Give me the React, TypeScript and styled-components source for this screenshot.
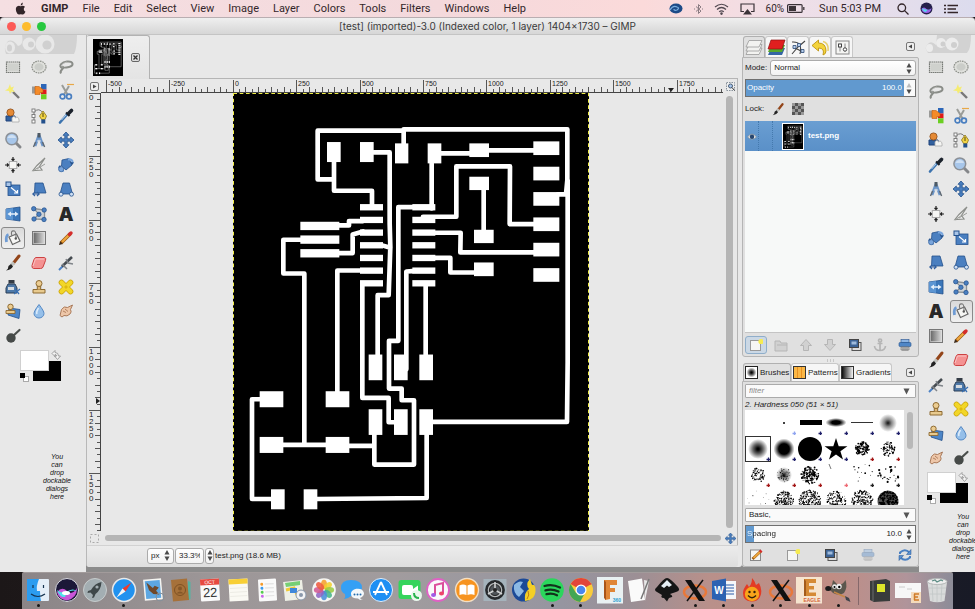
import React, { useState } from "react";
import styled, { createGlobalStyle, css } from "styled-components";

const GlobalStyle = createGlobalStyle`
  * { box-sizing: border-box; }
  body { margin: 0; background: #17161a; }
  button, input, select { font: inherit; color: inherit; margin: 0; padding: 0; border: 0; background: none; appearance: none; outline: none; min-width: 0; border-radius: 0; }
  button { display: flex; align-items: center; justify-content: center; }
  svg { display: block; flex: none; }
`;

const Screen = styled.div`
  display: flex;
  flex-direction: column;
  height: 100vh;
  overflow: hidden;
  font-family: "Liberation Sans", Arial, sans-serif;
  font-size: 8px;
  line-height: 10px;
  color: #1c1c1c;
`;

/* ---------- system menu bar ---------- */

const MenuBar = styled.header`
  display: flex;
  align-items: center;
  justify-content: space-between;
  height: 17px;
  flex: none;
  padding: 0 17px 0 14px;
  background: linear-gradient(90deg, #f5dfe2, #f4d9dc 45%, #fbdada 66%, #efdfe8 82%, #dcdcee);
  font-family: Roboto, sans-serif;
  font-size: 11px;
  line-height: 16px;
  color: #33262a;
`;
const MenuGroup = styled.nav`
  display: flex;
  align-items: center;
  gap: 14px;
`;
const MenuItem = styled.button<{ $strong?: boolean }>`
  font-weight: ${(p) => (p.$strong ? 700 : 400)};
`;
const Status = styled.div`
  display: flex;
  align-items: center;
  gap: 11px;
`;
const Battery = styled.span`
  display: flex;
  align-items: center;
  gap: 3px;
  font-size: 10px;
`;
const Clock = styled.span`
  margin: 0 5px 0 3px;
`;

/* ---------- window ---------- */

const TitleBar = styled.div`
  display: grid;
  grid-template-columns: 1fr auto 1fr;
  align-items: center;
  height: 18px;
  flex: none;
  padding: 0 7px;
  border-top: 1px solid #b9aeb1;
  border-bottom: 1px solid #c4c4c4;
  border-radius: 4px 4px 0 0;
  background: linear-gradient(#efefef, #d6d6d6);
  font-family: Inter, sans-serif;
  font-size: 10px;
  line-height: 14px;
  color: #3b3b3b;
`;
const Lights = styled.div`
  display: flex;
  gap: 6px;
`;
const Light = styled.button<{ $color: string }>`
  width: 9px;
  height: 9px;
  border-radius: 50%;
  background: ${(p) => p.$color};
`;
const Body = styled.main`
  display: grid;
  grid-template-columns: 86px minmax(0, 1fr) 177px 56px;
  grid-template-rows: minmax(0, 1fr);
  flex: 1;
  min-height: 0;
  background: #8b8b8b;
`;

/* ---------- toolbox ---------- */

const Toolbox = styled.aside<{ $narrow?: boolean }>`
  display: flex;
  flex-direction: column;
  padding: 0 ${(p) => (p.$narrow ? 1 : 7)}px 0 ${(p) => (p.$narrow ? 4 : 0)}px;
  background: #e8e8e8;
  overflow: hidden;
`;
const Eyes = styled.div<{ $narrow?: boolean }>`
  display: flex;
  padding-left: ${(p) => (p.$narrow ? 2 : 4)}px;
  height: 20px;
  flex: none;
`;
const ToolGrid = styled.div<{ $cols: number }>`
  display: grid;
  grid-template-columns: repeat(${(p) => p.$cols}, 1fr);
  grid-auto-rows: 1fr;
  height: ${(p) => (p.$cols === 3 ? 293 : 415)}px;
  flex: none;
`;
const ToolButton = styled.button<{ $active: boolean }>`
  border: 1px solid ${(p) => (p.$active ? "#8a8a8a" : "transparent")};
  border-radius: 3px;
  margin: 1px;
  svg {
    overflow: visible;
  }
  ${(p) =>
    p.$active &&
    css`
      background: linear-gradient(#dadada, #f0f0f0);
    `}
`;
const Swatches = styled.div<{ $narrow?: boolean }>`
  padding: 2px 0 0 ${(p) => (p.$narrow ? 4 : 20)}px;
`;
const DropHint = styled.p<{ $narrow?: boolean }>`
  width: 32px;
  margin: ${(p) => (p.$narrow ? "9px 0 0 24px" : "71px 0 0 41px")};
  flex: none;
  text-align: center;
  font-size: 7px;
  font-style: italic;
  line-height: 8px;
  color: #111;
`;

/* ---------- image area ---------- */

const ImagePane = styled.section`
  display: flex;
  flex-direction: column;
  margin-bottom: 5px;
  background: #e8e8e8;
  border-left: 1px solid #b8b8b8;
  border-radius: 0 0 3px 3px;
  min-width: 0;
  padding-right: 4px;
`;
const TabStrip = styled.div`
  display: flex;
  height: 44px;
  flex: none;
`;
const ImageTab = styled.div`
  display: flex;
  align-items: center;
  gap: 8px;
  width: 63px;
  padding-left: 6px;
  border: 1px solid #b2b2b2;
  border-width: 1px 1px 0 0;
  border-radius: 2px 3px 0 0;
  background: linear-gradient(#eee, #e4e4e4);
`;
const TabRule = styled.div`
  flex: 1;
  border-bottom: 1px solid #b5b5b5;
`;
const Workspace = styled.div`
  display: grid;
  grid-template-columns: 14px minmax(0, 1fr) 14px;
  grid-template-rows: 14px minmax(0, 1fr) 14px;
  flex: 1;
  min-height: 0;
  border-right: 1px solid #b5b5b5;
`;
const Corner = styled.button`
  width: 100%;
  height: 100%;
`;
const RulerTop = styled.div`
  overflow: hidden;
  border-bottom: 1px solid #444;
`;
const RulerLeft = styled.div`
  overflow: hidden;
  border-right: 1px solid #444;
`;
const CanvasView = styled.div`
  overflow: hidden;
  padding-left: 132px;
`;
const Scroll = styled.div<{ $vertical?: boolean }>`
  padding: ${(p) => (p.$vertical ? "3px 4px 3px 3px" : "4px 2px 4px 4px")};
`;
const ScrollThumb = styled.div`
  height: 100%;
  border-radius: 4px;
  background: #b5b5b5;
`;
const StatusBar = styled.footer`
  display: flex;
  align-items: center;
  gap: 1px;
  height: 22px;
  flex: none;
  padding: 0 0 2px 60px;
  border-top: 1px solid #d2d2d2;
  background: linear-gradient(#ececec, #dedede);
  border-radius: 0 0 3px 3px;
`;
const FieldBox = styled.div<{ $w?: number }>`
  display: flex;
  align-items: center;
  width: ${(p) => (p.$w ? p.$w + "px" : "auto")};
  flex: ${(p) => (p.$w ? "none" : "1")};
  height: 16px;
  padding: 0 ${(p) => (p.$w && p.$w < 10 ? 0 : 3)}px;
  border: 1px solid #ababab;
  border-radius: 3px;
  background: linear-gradient(#fff, #f3f3f3);
  min-width: 0;
`;
const Select = styled.select`
  flex: 1;
  width: 100%;
`;
const TextInput = styled.input<{ $right?: boolean }>`
  flex: 1;
  width: 100%;
  text-align: ${(p) => (p.$right ? "right" : "left")};
  &::placeholder {
    font-style: italic;
    color: #8c8c8c;
  }
`;

/* ---------- docks ---------- */

const Docks = styled.aside`
  display: flex;
  flex-direction: column;
  margin-bottom: 5px;
  padding-top: 1px;
  background: #e8e8e8;
  border-radius: 0 0 3px 3px;
  min-width: 0;
`;
const DockTabs = styled.div<{ $tall?: boolean }>`
  display: flex;
  height: ${(p) => (p.$tall ? 21 : 18)}px;
  flex: none;
  padding: 0 4px 0 1px;
`;
const DockTab = styled.button<{ $active?: boolean; $wide?: number }>`
  gap: 2px;
  width: ${(p) => p.$wide || 22}px;
  flex: none;
  justify-content: ${(p) => (p.$wide ? "flex-start" : "center")};
  padding-left: ${(p) => (p.$wide ? 1 : 0)}px;
  border: 1px solid ${(p) => (p.$active ? "#b0b0b0" : "#c8c8c8")};
  border-bottom: 0;
  border-radius: 3px 3px 0 0;
  background: ${(p) => (p.$active ? "#e0e0e0" : "#f6f6f6")};
  white-space: nowrap;
`;
const DockMenu = styled.button`
  margin: auto 0 auto auto;
`;
const Panel = styled.section<{ $grow?: boolean }>`
  display: flex;
  flex-direction: column;
  gap: 3px;
  flex: ${(p) => (p.$grow ? "1 1 0" : "none")};
  min-height: 0;
  padding: 2px 2px 0;
  border: 1px solid #b5b5b5;
  border-radius: 0 2px 3px 3px;
  background: #e0e0e0;
`;
const Row = styled.div`
  display: flex;
  align-items: center;
  gap: 3px;
  flex: none;
`;
const LockRow = styled(Row)`
  height: 18px;
  gap: 8px;
`;
const ScaleBox = styled.div<{ $fill: string; $ink: string }>`
  display: flex;
  align-items: center;
  height: 18px;
  flex: none;
  padding: 0 3px 0 1px;
  border: 1px solid #6f6f6f;
  background: linear-gradient(90deg, #6199cf ${(p) => p.$fill}, #fafafa ${(p) => p.$fill});
  color: ${(p) => p.$ink};
`;
const ScaleLabel = styled.label<{ $split?: boolean }>`
  ${(p) =>
    p.$split &&
    css`
      background: linear-gradient(90deg, #fff 6px, #1c1c1c 6px);
      background-clip: text;
      color: transparent;
    `}
`;
const ScaleInput = styled(TextInput)`
  margin-right: 4px;
`;
const LayerList = styled.div`
  flex: 1;
  min-height: 0;
  background: #f7f9f8;
  border-bottom: 1px solid #c4c4c4;
`;
const LayerRow = styled.div`
  display: flex;
  align-items: center;
  height: 30px;
  padding-left: 2px;
  background: linear-gradient(#6a9ed2, #5a90c8);
  color: #fff;
  font-weight: 700;
`;
const LayerCell = styled.span<{ $w: number }>`
  display: flex;
  align-items: center;
  width: ${(p) => p.$w}px;
  height: 100%;
  border-right: 1px dotted #4479ad;
`;
const LayerThumb = styled.span`
  margin: 0 4px 0 9px;
  border: 1px solid #fff;
`;
const Actions = styled.div`
  display: flex;
  align-items: center;
  justify-content: space-between;
  height: 20px;
  padding-bottom: 2px;
  flex: none;
`;
const ActionButton = styled.button<{ $focus?: boolean; $dim?: boolean }>`
  width: 22px;
  height: 18px;
  border-radius: 3px;
  opacity: ${(p) => (p.$dim ? 0.4 : 1)};
  ${(p) =>
    p.$focus &&
    css`
      border: 1px solid #8faeca;
      background: #cbd8e5;
    `}
`;
const Grip = styled.div`
  height: 6px;
  flex: none;
  display: flex;
  align-items: center;
  justify-content: center;
`;
const BrushTitle = styled.div`
  font-style: italic;
  line-height: 8px;
  flex: none;
`;
const BrushArea = styled.div`
  display: flex;
  flex: 1;
  min-height: 0;
  margin-top: -2px;
`;
const BrushGrid = styled.div`
  display: grid;
  grid-template-columns: repeat(6, 26px);
  grid-auto-rows: 26px;
  flex: 1;
  background: #fff;
  overflow: hidden;
`;
const BrushCell = styled.button<{ $active: boolean }>`
  border: 1px solid ${(p) => (p.$active ? "#333" : "transparent")};
  overflow: hidden;
`;
const BrushScroll = styled.div`
  width: 12px;
  padding: 2px 3px;
`;
const BrushThumb = styled.div`
  height: 37px;
  border-radius: 3px;
  background: #b8b8b8;
`;
const BrushPanelBox = styled(Panel)`
  height: 186px;
`;
const FlatField = styled.div`
  display: flex;
  align-items: center;
  height: 14px;
  flex: none;
  padding: 0 5px 0 3px;
  border: 1px solid #aaa;
  border-radius: 1px;
  background: #fafafa;
`;

/* ---------- system dock ---------- */

const Desktop = styled.div`
  display: flex;
  height: 37px;
  flex: none;
  padding: 0 22px;
  background: linear-gradient(90deg, #1c1718, #2a2426 50%, #181a26);
`;
const Shelf = styled.div`
  display: flex;
  align-items: stretch;
  flex: 1;
  padding: 0 2px;
  border-top: 1px solid #a29b9b;
  border-radius: 2px 2px 0 0;
  background: linear-gradient(90deg, #8b8587, #9c9697 20%, #a19c9e 40%, #9695a0 58%, #9c8f95 66%, #b9908a 74%, #c08d84 87%, #b0949a 95%, #8c8c98);
`;
const ShelfGroup = styled.div<{ $n: number }>`
  display: flex;
  flex: ${(p) => p.$n};
`;
const ShelfItem = styled.button`
  flex: 1;
  flex-direction: column;
  justify-content: flex-start;
  padding-top: 4px;
`;
const Dot = styled.span<{ $on?: boolean }>`
  width: 3px;
  height: 3px;
  border-radius: 50%;
  background: ${(p) => (p.$on ? "#161616" : "transparent")};
`;
const ShelfRule = styled.div`
  width: 1px;
  margin: 4px 6px;
  background: #85686a;
`;

/* ---------- drawings ---------- */

const chipRows = [342, 380, 418, 456, 494, 532, 570];
const pads: number[][] = [
  [292, 156, 41, 60], [391, 156, 41, 60], [496, 160, 40, 60], [594, 160, 41, 60], [719, 160, 59, 41],
  ...[154, 230, 306, 382, 458, 534].map((y) => [911, y, 78, 41]),
  [719, 260, 59, 40], [733, 419, 59, 40], [733, 517, 59, 41],
  ...chipRows.map((y) => [391, y, 69, 19]),
  ...chipRows.map((y) => [548, y, 69, 19]),
  ...[395, 436, 477].map((y) => [212, y, 117, 25]),
  ...[417, 493, 569].map((x) => [x, 793, 41, 77]),
  ...[417, 493, 569].map((x) => [x, 957, 41, 77]),
  [90, 903, 71, 48], [288, 903, 71, 48], [90, 1040, 71, 48], [288, 1040, 71, 48],
  [124, 1197, 41, 60], [222, 1197, 41, 60],
];
const traces =
  "M313 215V302H427V345 M313 268H264V122H522 M522 165V118H1013V270L1009 313H985 M1014 270V816L1012 995H610 " +
  "M432 187H480V400L482 470L477 615H444V795 M455 465L482 473 M606 220V355 M634 190H720 M778 181H912 " +
  "M580 380H680V229H841L840 402H912 M762 300V420 M615 428H693L692 487H912 M615 503H662V547H735 " +
  "M548 351H506V752H478V895H516V930H553V1123H434V1030 M548 543L530 544V837 M588 585V795 " +
  "M328 406H358V393H400 M328 489H369V433L400 424 M213 449H161V550H224V1064 M391 541H323V905 " +
  "M398 580V923H477V996H495 M358 1067H434 M160 1064H290 M90 927H67V1226H124 M262 1226L591 1223V1030";

const Board = ({ w, h, frame }: { w: number; h: number; frame?: boolean }) => (
  <svg width={w} height={h} viewBox="10 9 1068 1316" preserveAspectRatio="none" role="img" aria-label="test.png">
    <rect x="10" y="9" width="1068" height="1316" fill="#000" />
    <path d={traces} fill="none" stroke="#fff" strokeWidth={frame ? 14 : 18} strokeLinejoin="round" strokeLinecap="round" opacity={frame ? 1 : 0.65} />
    {pads.map(([x, y, pw, ph], i) => (
      <rect key={i} x={x} y={y} width={pw} height={ph} fill="#fff" />
    ))}
    {frame && <rect x="11" y="10" width="1066" height="1313" fill="none" stroke="#f0ee48" strokeWidth="4" strokeDasharray="11 8" />}
  </svg>
);

const tickIdx = Array.from({ length: 110 }, (_, i) => i);
const HRuler = () => (
  <svg width="100%" height="13" fontSize="7" fill="#222">
    {tickIdx.map((i) => {
      const x = Math.round(5 + (i * 63.4) / 10) + 0.5;
      const top = i % 10 === 0 ? 1 : i % 2 === 0 ? 8 : 10;
      return <path key={i} d={`M${x} ${top}V13`} stroke="#555" />;
    })}
    {[-500, -250, 0, 250, 500, 750, 1000, 1250, 1500, 1750].map((n, i) => (
      <text key={n} x={Math.round(7 + i * 63.4)} y="7">{n}</text>
    ))}
    <path d="M567 9h6l-3 4z" />
  </svg>
);
const VRuler = () => (
  <svg width="13" height="100%" fontSize="8" fill="#222">
    {tickIdx.slice(0, 70).map((i) => {
      const y = Math.round((i * 63.4) / 10) + 0.5;
      const left = i % 10 === 0 ? 2 : i % 2 === 0 ? 8 : 10;
      return <path key={i} d={`M${left} ${y}H13`} stroke="#555" />;
    })}
    {["0", "250", "500", "750", "1000", "1250", "1500"].map((s, i) =>
      s.split("").map((c, k) => (
        <text key={s + k} x="2" y={Math.round(7 + i * 63.4 + k * 7)}>{c}</text>
      ))
    )}
    <path d="M9 305v6l4-3z" />
  </svg>
);

const B = "#4a7fc0";
const D = "#23508c";
const tools: [string, React.ReactNode][] = [
  ["Rectangle Select", <><rect x="1.5" y="3" width="13" height="10.5" fill="#dcddda" stroke="#777a76" strokeWidth="1.2" strokeDasharray="1.6 .5" /><rect x="3" y="4.6" width="10" height="7.3" fill="#cfd1cd" /></>],
  ["Ellipse Select", <><ellipse cx="8" cy="8" rx="7" ry="6" fill="#dfe0dc" stroke="#8b8e88" strokeWidth="1.2" strokeDasharray="1.6 .8" /><ellipse cx="8" cy="8" rx="4.6" ry="3.7" fill="#cbcdc9" /></>],
  ["Free Select", <><path d="M4 9C0 7 4 3 9 2.500C16 2 16 7 11 8C8 8.600 5 9 4 8C5 7 6 9 4 10.500C3 11.500 2 13 3 14.500" fill="none" stroke="#8a8d88" strokeWidth="2" /><path d="M4.500 8C2 6.500 5 4 9 3" fill="none" stroke="#c8c9c6" strokeWidth=".7" /></>],
  ["Fuzzy Select", <><path d="M6.500 6.500L14 14" stroke="#777" strokeWidth="2.4" /><path d="M6 6L8 8" stroke="#f4f4ef" strokeWidth="2" /><path d="M5 0L6 3.500L9 2.500L7.500 5.500L10 8L6.500 7.500L5 10L4 7L0 6.500L3.200 4.500z" fill="#f5ec72" /></>],
  ["Select by Color", <><rect x="10" y="0" width="5.500" height="5.500" fill="#2c66b8" /><rect x="10" y="5.500" width="5.500" height="4.800" fill="#e01818" /><rect x="10" y="10.300" width="5.500" height="5" fill="#6bcf22" /><path d="M1 2.500h4.500v7H1z" fill="#9a9a98" /><path d="M4 2.500h4l4 3v3H9v2H4z" fill="#f58b28" stroke="#c05c0a" strokeWidth=".6" /></>],
  ["Scissors Select", <><path d="M9 .5H16" stroke="#e8a848" strokeWidth="1.200" /><path d="M4 1L9.500 10.500M11 2L6 10.500" stroke="#9a9c98" strokeWidth="2" /><circle cx="4.500" cy="12.500" r="2.400" fill="none" stroke={B} strokeWidth="1.700" /><circle cx="11" cy="12.500" r="2.400" fill="none" stroke={B} strokeWidth="1.700" /></>],
  ["Foreground Select", <><path d="M1 8h9v5H1z" fill="#32619f" stroke="#1f437a" /><circle cx="5.500" cy="4.500" r="3.600" fill="#e58a35" stroke="#8b4b16" strokeWidth=".8" /><path d="M7 14V10c1-2 3-2 3.500 0 2-2 4 0 3.500 4z" fill="#f5f5f3" stroke="#aaa" strokeWidth=".8" /></>],
  ["Paths", <><path d="M3 14V4Q8-1 12 5" fill="none" stroke="#777" /><g fill="#fff" stroke="#777" strokeWidth=".9"><rect x="1" y="1" width="3" height="3" /><rect x="1" y="6.500" width="3" height="3" /><rect x="1" y="12" width="3" height="3" /></g><path d="M12 3L15.500 8L14 11.500H10.500L8.500 8z" fill="#f1d445" stroke="#8b7418" strokeWidth=".8" /><rect x="10.300" y="11.500" width="4" height="4" fill={D} /><path d="M12 5v4" stroke="#564610" /></>],
  ["Color Picker", <><path d="M2 14.500L9 6.500" stroke="#3c73ae" strokeWidth="2.600" strokeLinecap="round" /><path d="M3.500 12L8 7" stroke="#b4d2ee" strokeWidth="1" /><path d="M8 4.500L11.500 8" stroke="#1b222c" strokeWidth="2" /><path d="M10.500 5.500L13.500 2.500" stroke="#1b222c" strokeWidth="3.600" strokeLinecap="round" /></>],
  ["Zoom", <><path d="M11 11L15 15" stroke="#85878a" strokeWidth="3" strokeLinecap="round" /><circle cx="6.800" cy="6.800" r="5.900" fill="#a7c6ea" stroke="#8b9097" strokeWidth="1.500" /><path d="M2.500 6a4.500 4.500 0 0 1 8.500 0z" fill="#cfe0f3" /></>],
  ["Measure", <><path d="M8 3L4 14M8 3L12 14" stroke="#6c95c8" strokeWidth="2.800" /><path d="M6 9h4" stroke="#dfe3e8" /><path d="M8 1v4.500" stroke="#4e5a64" strokeWidth="3" /><path d="M4.600 10L2.500 15M11.500 10L13.600 15" stroke="#5f6872" strokeWidth="1.400" /></>],
  ["Move", <path d="M8 0L11 3.300H9.200V6.800H12.700V5L16 8L12.700 11V9.200H9.200V12.700H11L8 16L5 12.700H6.800V9.200H3.300V11L0 8L3.300 5V6.800H6.800V3.300H5z" fill={B} stroke={D} strokeWidth=".8" />],
  ["Align", <><rect x="4.300" y="4.500" width="7.500" height="7" fill="#f5f5f3" stroke="#aaa" /><path d="M8 0v4M6.500 2L8 3.500L9.500 2M8 16v-4M6.500 14L8 12.500L9.500 14M0 8h4M2 6.500L3.500 8L2 9.500M16 8h-4M14 6.500L12.500 8L14 9.500" fill="none" stroke="#222" strokeWidth="1.200" /></>],
  ["Crop", <><path d="M14 1L6 8.500L2 13.500L11 13L8.500 9.500z" fill="#eee" stroke="#8c8e8a" strokeWidth="1.200" /><path d="M2 14L8.500 9.500M6 12L14 7" stroke="#9c9e9a" /></>],
  ["Rotate", <><path d="M4 3L11 1.500L14 8L8 13L3.500 9z" fill={B} stroke={D} strokeWidth=".8" /><path d="M10 2.500Q15 2 14.500 6M6 13.500Q1 14 1.500 10" fill="none" stroke="#7aa6dd" strokeWidth="2.200" /><path d="M12 5l4 .5-2 2.500zM4 11L0 10.500 2 8z" fill={D} /><circle cx="3.200" cy="12.200" r="2.600" fill="#79a5dc" stroke={D} strokeWidth=".6" /></>],
  ["Scale", <><rect x="3" y="4" width="12" height="10.500" fill={B} stroke={D} strokeWidth=".8" /><rect x="1" y="1" width="5" height="4.500" fill="#a9c5e8" stroke={D} /><path d="M6 6.500L12 11.500M12.500 9v3h-3.500" stroke="#fff" fill="none" strokeWidth="1.200" /></>],
  ["Shear", <><path d="M4 2H12L15 12H3.500z" fill={B} stroke={D} strokeWidth=".8" /><path d="M2 13h6M6 11l2.200 2L6 15M4 11l-2.200 2L4 15" stroke="#315f9e" fill="#d2e2f5" strokeWidth="1.100" /></>],
  ["Perspective", <><path d="M5 2h6.500L14.500 13H2z" fill={B} stroke={D} strokeWidth=".8" /><circle cx="3" cy="13.200" r="2" fill="#cfe0f5" stroke={D} strokeWidth=".8" /><circle cx="13.500" cy="13.200" r="2" fill="#cfe0f5" stroke={D} strokeWidth=".8" /></>],
  ["Flip", <><path d="M1 3L15 1V15L1 13z" fill="#3a76b9" stroke={D} strokeWidth=".8" /><path d="M8 2V14L1 13V3z" fill="#5c95d2" /><path d="M2.500 8L6 5.500V10.500zM13.500 8L10 5.500V10.500z" fill="#e5effa" /><path d="M5 8h6" stroke="#e5effa" strokeWidth="1.500" /></>],
  ["Cage Transform", <><path d="M2.500 2.500L13.500 4V13.500L3 13L8 8z" fill="#cfd4d8" stroke="#8d9296" strokeWidth="1.300" /><g fill={B} stroke={D} strokeWidth=".7"><circle cx="2.700" cy="2.700" r="2.200" /><circle cx="13.200" cy="4" r="2.200" /><circle cx="7.900" cy="8.300" r="2.200" /><circle cx="3" cy="13" r="2.200" /><circle cx="13" cy="13.500" r="2.200" /></g></>],
  ["Text", <text x="8" y="15" textAnchor="middle" fontFamily="Inter" fontSize="19" fontWeight="900" fill="#282828">A</text>],
  ["Bucket Fill", <><path d="M3.500 4.500Q.5 5.500 1.500 12" fill="none" stroke="#6e9bd4" strokeWidth="2.800" /><path d="M4 7L11.500 4L15 11L7.500 14.500z" fill="#f6f6f4" stroke="#666" strokeWidth="1.200" /><path d="M7 6Q5 0 9.500 1Q11 1.500 11 8" fill="none" stroke="#777" strokeWidth="1.100" /><circle cx="10.800" cy="8.500" r="1.200" fill="#555" /></>],
  ["Blend", <><rect x="1.500" y="1.500" width="13" height="13" fill="url(#blendGrad)" stroke="#777" /><rect x="2.500" y="2.500" width="11" height="11" fill="none" stroke="#e0e0e0" strokeWidth=".6" /></>],
  ["Pencil", <><path d="M3 13L12.500 3.500" stroke="#96540f" strokeWidth="3.600" /><path d="M4 12L11.500 4.500" stroke="#eda63c" strokeWidth="2.400" /><path d="M11.500 4.500L13 3" stroke="#d52c2c" strokeWidth="3.400" strokeLinecap="round" /><path d="M1 15L2 11.200L4.800 14z" fill="#3c2b1b" /></>],
  ["Paintbrush", <><path d="M8.500 8L14 1" stroke="#93451a" strokeWidth="3" strokeLinecap="round" /><path d="M6.500 10L9 7.500" stroke="#bfc1bd" strokeWidth="3.500" /><path d="M1 15.500Q3.500 14 3.500 11L6 9L8 11.500Q6 15 1 15.500z" fill="#222" /></>],
  ["Eraser", <><path d="M5 2.500H13.500Q15.500 3 14.500 5.500L12 12Q11.500 13.500 9.500 13.500H2.500Q.5 13 1 10.500L3 4.500Q3.500 3 5 2.500z" fill="#f49292" stroke="#cc4141" /><path d="M2 11L4.500 4H13" fill="none" stroke="#f9c3c3" /></>],
  ["Airbrush", <><path d="M1 15L5 11" stroke="#4d82c5" strokeWidth="2" /><path d="M4 11.500L14 2" stroke="#454b50" strokeWidth="2.600" /><path d="M8 4L10 8L15 9M4 9L9 14" fill="none" stroke="#80858a" strokeWidth="1.500" /></>],
  ["Ink", <><path d="M3.500 1h6v3.500h-6z" fill="#333b45" /><path d="M3 5h7l2 4v5H1V9z" fill="#4e79a8" stroke="#2b3f57" /><rect x="3" y="8" width="6" height="3" fill="#d6dce2" /><path d="M9 15l6-5M10 10l4 5" stroke="#386fb2" strokeWidth="1.300" /></>],
  ["Clone", <><path d="M2 10.500h12v3.500H2z" fill="#e8ca8e" stroke="#8d6a32" /><path d="M6.300 10.500V7h3.400v3.500" fill="#dcb675" stroke="#8d6a32" /><circle cx="8" cy="4.500" r="3" fill="#eccd92" stroke="#8d6a32" /></>],
  ["Heal", <><path d="M3.500 3.500L12.500 12.500M12.500 3.500L3.500 12.500" stroke="#c9a208" strokeWidth="5.600" strokeLinecap="round" /><path d="M3.500 3.500L12.500 12.500M12.500 3.500L3.500 12.500" stroke="#f2d628" strokeWidth="4.300" strokeLinecap="round" /><path d="M6 8l2-2 2 2-2 2z" fill="#ddb812" /></>],
  ["Perspective Clone", <><path d="M4 5L15 6.500L14 15.500L3 12z" fill="#4d86c7" stroke={D} strokeWidth=".8" /><path d="M1 7.500h9v3H1z" fill="#e8ca8e" stroke="#8d6a32" strokeWidth=".9" /><circle cx="5.500" cy="3.800" r="2.700" fill="#eccd92" stroke="#8d6a32" /><path d="M5.500 6v2" stroke="#8d6a32" strokeWidth="2" /></>],
  ["Blur", <><path d="M8 1.500Q13 8 13 10.500A5 4.500 0 0 1 3 10.500Q3 8 8 1.500z" fill="#95bfe9" stroke="#5589c4" /><path d="M7.500 5Q5 9 6 11" stroke="#deedfb" fill="none" strokeWidth="1.500" /></>],
  ["Smudge", <><path d="M2 12.500L3.500 6.500Q6 2.500 9.500 4.500L14.500 2L12.500 6.500Q14 9 12 11Q9 14 6 12.500L4 14z" fill="#edc6a8" stroke="#a3714f" strokeWidth=".9" /><path d="M5 8l3 1.500M7 6l3 2.500" stroke="#a3714f" strokeWidth=".8" /></>],
  ["Dodge / Burn", <><path d="M8 8L14.500 2" stroke="#4b4f4c" strokeWidth="2.200" strokeLinecap="round" /><circle cx="6" cy="10" r="4.700" fill="#464a48" /></>],
];

const hintWords = ["You", "can", "drop", "dockable", "dialogs", "here"];

const ToolboxPanel = ({ narrow }: { narrow?: boolean }) => {
  const [tool, setTool] = useState("Bucket Fill");
  return (
    <Toolbox $narrow={narrow} aria-label="Toolbox">
      <Eyes $narrow={narrow}>
        <svg width={narrow ? 46 : 74} height="19" viewBox={narrow ? "0 0 46 19" : "0 0 74 19"}>
          {narrow ? (
            <>
              <path d="M12 0H46Q46 14 42 18H3Q-2 12 4 8Q7 6 11 10z" fill="#d2d2d2" />
              <g fill="#ececec"><ellipse cx="4.500" cy="13" rx="3.500" ry="4" /><circle cx="16" cy="8" r="5" /><circle cx="27" cy="9" r="6.500" /></g>
              <g fill="#cfcfcf"><circle cx="18" cy="9" r="2.500" /><circle cx="29" cy="10" r="3" /></g>
            </>
          ) : (
            <>
              <path d="M18 0H73Q73 13 70 19H2Q-1 11 4 6Q9 4 14 11Q20 10 18 0z" fill="#d2d2d2" />
              <g fill="#e8e8e8"><ellipse cx="6" cy="12.500" rx="5" ry="6" /><circle cx="25" cy="9" r="6.500" /><circle cx="41" cy="9" r="9.500" /></g>
              <g fill="#d0d0d0"><ellipse cx="5.500" cy="13" rx="2.500" ry="3.500" /><circle cx="27" cy="9.500" r="3" /><circle cx="43" cy="10" r="4.600" /></g>
            </>
          )}
        </svg>
      </Eyes>
      <ToolGrid $cols={narrow ? 2 : 3}>
        {tools.map(([name, art]) => (
          <ToolButton key={name} aria-label={name} $active={tool === name} onClick={() => setTool(name)}>
            <svg width="16" height="16" viewBox="0 0 16 16">{art}</svg>
          </ToolButton>
        ))}
      </ToolGrid>
      <Swatches $narrow={narrow}>
        <svg width="42" height="32">
          <rect x="13" y="11" width="28" height="20" />
          <rect x=".5" y=".5" width="28" height="20" fill="#fff" stroke="#d0d0d0" />
          <rect x="3.500" y="26.500" width="5" height="5" fill="#fff" stroke="#aaa" />
          <rect x="0" y="23" width="5" height="5" />
          <path d="M32 3.500L35 .5V2.500Q38.500 2.500 38.500 6H40.500L37.500 9.500L34.500 6H36.500Q36.500 4.500 35 4.500V6.500z" fill="#f5f5f5" stroke="#999" strokeWidth=".9" />
        </svg>
      </Swatches>
      <DropHint $narrow={narrow}>
        {hintWords.map((word) => (
          <React.Fragment key={word}>{word}<br /></React.Fragment>
        ))}
      </DropHint>
    </Toolbox>
  );
};

const UpDown = ({ dim }: { dim?: boolean }) => (
  <svg width="6" height="11" viewBox="0 0 6 11" fill="#4a4a4a">
    <path d="M3 0L5.500 4.500H.5z" opacity={dim ? 0.35 : 1} />
    <path d="M3 11L5.500 6.500H.5z" />
  </svg>
);
const Down = () => (
  <svg width="7" height="7" viewBox="0 0 7 7"><path d="M.5 .5h6L3.500 6.500z" fill="#555" /></svg>
);
const BoxArrow = ({ flip }: { flip?: boolean }) => (
  <svg width="9" height="9" viewBox="0 0 9 9">
    <rect x=".5" y=".5" width="8" height="8" rx="1.500" fill="#eee" stroke="#777" />
    <path d={flip ? "M6 2.500V6.500L2.500 4.500z" : "M3 2.500V6.500L6.500 4.500z"} fill="#444" />
  </svg>
);

const actionArt: Record<string, React.ReactNode> = {
  new: <><rect x="1.500" y="2.500" width="10" height="10" fill="#f6f6f4" stroke="#999" /><circle cx="12" cy="3.500" r="2.600" fill="#f7ec4f" /></>,
  folder: <path d="M1 3h5l1 2h6v8H1zM3 7h10" fill="#bbb" stroke="#777" />,
  up: <path d="M7 1.500L12.500 7.500H9.500V12.500H4.500V7.500H1.500z" fill="#bbb" stroke="#777" />,
  down: <path d="M7 12.500L12.500 6.500H9.500V1.500H4.500V6.500H1.500z" fill="#bbb" stroke="#777" />,
  dup: <><rect x="4" y="4.500" width="9" height="8" fill="#ddd" stroke="#555" /><rect x="1.500" y="1.500" width="9" height="8" fill="#3c6395" stroke="#444" /><rect x="3.500" y="3.500" width="5" height="3" fill="#9fbbdc" /></>,
  anchor: <path d="M7 4V12.500M4.500 5.500h5M1.500 8Q2 12.500 7 12.500Q12 12.500 12.500 8M7 1a1.500 1.500 0 1 0 .1 0" fill="none" stroke="#777" strokeWidth="1.700" />,
  shred: <><rect x="3" y="1.500" width="8" height="3" fill="#8db4e2" stroke={D} strokeWidth=".6" /><rect x="1" y="4.500" width="12" height="4" rx="1" fill="#4f86c6" stroke={D} strokeWidth=".6" /><path d="M3 9h8v3H3z" fill="#c9c9c9" stroke="#777" strokeWidth=".7" /><path d="M5 9.500v3.500M7 9.500v3.500M9 9.500v3.500" stroke="#777" strokeWidth=".8" /></>,
  edit: <><rect x="1.500" y="2" width="10" height="10.500" fill="#f6f6f4" stroke="#888" /><path d="M3.500 11L12 3" stroke="#9b5a12" strokeWidth="2.800" /><path d="M4.500 10L11 4" stroke="#eda63c" strokeWidth="1.800" /><path d="M11 4l1.500-1.500" stroke="#d52c2c" strokeWidth="2.800" /></>,
  refresh: <><path d="M2 6V4.500Q7 0 11.500 4.500M12 8V9.500Q7 14 2.500 9.500" fill="none" stroke="#4a80c2" strokeWidth="2" /><path d="M13 1.500V6.500H8.500zM1 12.500V7.500H5.500z" fill="#5a91d3" stroke={D} strokeWidth=".5" /></>,
};
const Action = ({ id, label, focus, dim }: { id: string; label: string; focus?: boolean; dim?: boolean }) => (
  <ActionButton aria-label={label} $focus={focus} $dim={dim}>
    <svg width="14" height="14" viewBox="0 0 14 14">{actionArt[id]}</svg>
  </ActionButton>
);

const random = (seed: number) => {
  let s = seed * 7919 + 13;
  return () => {
    s = (s * 16807) % 2147483647;
    return s / 2147483647;
  };
};
const Splat = ({ seed, n, spread, size }: { seed: number; n: number; spread: number; size: number }) => {
  const r = random(seed);
  for (let i = 0; i < 5; i++) r();
  return (
    <g>
      {Array.from({ length: n }, (_, i) => {
        const a = r() * 6.283;
        const d = Math.sqrt(r()) * spread;
        return <circle key={i} cx={13 + Math.cos(a) * d} cy={13 + Math.sin(a) * d} r={size * (0.4 + r() * 0.6)} />;
      })}
    </g>
  );
};
const NAVY = "#20206a";
const RED = "#a31616";
const brushes: [React.ReactNode, string | null][] = [
  [null, null],
  [<circle cx="13" cy="13" r="1" />, "#8fa4f0"],
  [<rect x="3" y="10" width="22" height="5" />, NAVY],
  [<ellipse cx="13" cy="12.500" rx="10.500" ry="4.500" fill="url(#softWide)" />, NAVY],
  [<path d="M2 12.500H24" stroke="#000" strokeWidth=".8" />, NAVY],
  [<circle cx="13" cy="13" r="9" fill="url(#soft0)" />, NAVY],
  [<circle cx="13" cy="13" r="10" fill="url(#soft1)" />, NAVY],
  [<circle cx="13" cy="13" r="10.500" fill="url(#soft2)" />, NAVY],
  [<circle cx="13" cy="13" r="12" />, NAVY],
  [<path d="M13 2L15.700 10.300H24.400L17.400 15.300L20 23.600L13 18.500L6 23.600L8.600 15.300L1.600 10.300H10.300z" />, NAVY],
  [<Splat seed={2} n={110} spread={7} size={1} />, RED],
  [<Splat seed={5} n={60} spread={7} size={0.9} />, RED],
  [<Splat seed={8} n={80} spread={7} size={0.8} />, RED],
  [<><circle cx="13" cy="13" r="8" fill="url(#soft0)" /><Splat seed={11} n={60} spread={7} size={0.6} /></>, RED],
  [<Splat seed={14} n={140} spread={9} size={1} />, RED],
  [<path d="M6 2L8 7" stroke="#555" strokeWidth=".8" />, "#ee6b74"],
  [<Splat seed={20} n={12} spread={12} size={0.9} />, "#222"],
  [<Splat seed={23} n={24} spread={11} size={1.2} />, "#222"],
  [<Splat seed={26} n={20} spread={12} size={0.5} />, null],
  [<Splat seed={29} n={190} spread={10} size={0.8} />, null],
  [<Splat seed={32} n={260} spread={11} size={0.8} />, null],
  [<Splat seed={35} n={170} spread={10} size={0.8} />, null],
  [<Splat seed={38} n={210} spread={11} size={0.8} />, null],
  [<><circle cx="13" cy="13" r="10.500" fill="#555" /><Splat seed={41} n={110} spread={10} size={1.2} /></>, null],
];

const F = "Liberation Sans";
const XArt = (
  <><ellipse cx="13" cy="15" rx="11" ry="6.500" fill="none" stroke="#e8783a" strokeWidth="2.400" /><path d="M3 3H9L23 24H17z" fill="#111" /><path d="M21 3L5 24" stroke="#111" strokeWidth="1.500" /></>
);
const apps: [string, React.ReactNode, boolean?][] = [
  ["Finder", <><rect x="2" y="2" width="22" height="22" rx="1" fill="#e4eef8" /><path d="M2 2H14Q11 9 12 14H15Q15 20 16 24H2z" fill="#2b9cf0" /><path d="M6 17Q13 22 20 17M8 8v3M18.500 8v3" fill="none" stroke="#15324f" strokeWidth="1.200" /></>, true],
  ["Siri", <><circle cx="13" cy="13" r="11.500" fill="#1b1838" stroke="#d9d9df" /><path d="M3 15Q8 9 13 14Q18 19 23 11Q23 21 13 23.500Q4 22 3 15z" fill="#c955d8" /><path d="M3 13Q9 18 14 14Q19 11 23 14Q13 12 11 20Q6 21 3 13z" fill="#4fe0ea" /><ellipse cx="12" cy="16" rx="4" ry="2" fill="#fff" /></>],
  ["Launchpad", <><circle cx="13" cy="13" r="11.500" fill="#a3aeb2" stroke="#c7cccd" /><path d="M19.500 5Q13 6 9 13L6 14L5.500 16L8.500 15.500L11 18L10 21L12 20.500L13.500 17Q19 13 19.500 5z" fill="#3e4749" /><circle cx="15" cy="10" r="1.600" fill="#a3aeb2" /></>],
  ["Safari", <><circle cx="13" cy="13" r="11.500" fill="#2192ef" stroke="#e9e9e9" strokeWidth="1.500" /><path d="M20.500 5.500L14.500 14.500L11.500 11.500z" fill="#ee3b2d" /><path d="M5.500 20.500L11.500 11.500L14.500 14.500z" fill="#f5f5f5" /></>, true],
  ["Mail", <><g transform="rotate(-5 13 13)"><rect x="4" y="2" width="18" height="21" fill="#f4f4f1" /><rect x="5.500" y="3.500" width="15" height="18" fill="#5da7e2" /><path d="M7 5L13 11L15 9L19 11L16 14L19 18L13 17L9 13z" fill="#70492a" /></g><circle cx="20" cy="20" r="4" fill="none" stroke="#85909a" /></>],
  ["Contacts", <><path d="M20 4l2.500 1v17L20 23z" fill="#55b3a1" /><path d="M3 3L19 1.500L21 23L5 24.500z" fill="#a6713a" /><circle cx="12" cy="13" r="5.500" fill="none" stroke="#7f5223" /><circle cx="12" cy="11.500" r="2" fill="#845728" /><path d="M8.500 16.500q3.500-4 7 0" fill="#845728" /></>],
  ["Calendar", <g transform="rotate(-3 13 13)"><rect x="3.500" y="2" width="19" height="22" rx="1" fill="#fafafa" /><path d="M3.500 2h19v6h-19z" fill="#e74a40" /><text x="13" y="7" textAnchor="middle" fontFamily={F} fontSize="5" fill="#fff">OCT</text><text x="13" y="20" textAnchor="middle" fontFamily={F} fontSize="13" fill="#333">22</text></g>],
  ["Notes", <g transform="rotate(-3 13 13)"><rect x="4" y="2" width="19" height="22" fill="#faf9f3" /><rect x="4" y="2" width="19" height="5" fill="#f8cf35" /><path d="M5 11h17M5 15h17M5 19h17" stroke="#ecebe4" /></g>],
  ["Reminders", <g transform="rotate(-3 13 13)"><rect x="4.500" y="2" width="18" height="22" rx="1" fill="#fafafa" /><circle cx="8" cy="7" r="1.500" fill="#f59b2b" /><circle cx="8" cy="11" r="1.500" fill="#3a9cf0" /><circle cx="8" cy="15" r="1.500" fill="#54cc4d" /><circle cx="8" cy="19" r="1.500" fill="#c966e8" /><path d="M11 7h9M11 11h9M11 15h9M11 19h9" stroke="#ddd" /></g>],
  ["Maps", <><rect x="2" y="4" width="19" height="19" fill="#eef0e6" transform="rotate(-6 12 13)" /><path d="M3 6L18 4V8L4 10z" fill="#77cf75" /><path d="M4 13L12 11L17 22" fill="none" stroke="#f2ca35" strokeWidth="3" /><path d="M8 11h7v5h-7z" fill="#3f88da" /><circle cx="19" cy="18" r="5" fill="#f2f3f5" stroke="#8998ab" /><circle cx="19" cy="18" r="2" fill="#8998ab" /></>],
  ["Photos", <><circle cx="13" cy="13" r="11.800" fill="#f6f6f4" />{["#f6a02d", "#f3d02f", "#9acb44", "#48b58b", "#4a90d9", "#8f68c4", "#d25a93", "#ee5b40"].map((c, i) => (<ellipse key={c} cx="13" cy="7.500" rx="3" ry="4.700" fill={c} opacity=".88" transform={`rotate(${i * 45} 13 13)`} />))}</>],
  ["Messages", <><path d="M2 11Q2 3 12 3Q23 3 23 11Q23 19 12 19Q9 22 5 22Q7 20 6 17Q2 15 2 11z" fill="#35a0f5" /><path d="M12 17a6.500 4.800 0 1 1 9 4q1 2 3 2-3 .5-5-1.500-7 0-7-4.500z" fill="#f4f8fb" /><g fill="#246bab"><circle cx="15.500" cy="17.500" r="1" /><circle cx="18.500" cy="17.500" r="1" /><circle cx="21.500" cy="17.500" r="1" /></g></>],
  ["App Store", <><circle cx="13" cy="13" r="11.500" fill="#1e8ff3" stroke="#e6edf4" /><path d="M13 5L7 18M13 5L19 18M5 15H21" stroke="#fff" strokeWidth="1.800" fill="none" /></>],
  ["FaceTime", <><rect x="1.500" y="3" width="22" height="19" rx="3" fill="#35d45c" /><rect x="5" y="8" width="11" height="10" rx="2" fill="#fff" /><path d="M16 12L21 8.500V17.500L16 14z" fill="#fff" /><circle cx="19.500" cy="18.500" r="5.500" fill="#e9f8ec" /><path d="M17 16q0 5 5 5" stroke="#28b24c" strokeWidth="2" fill="none" /></>],
  ["iTunes", <><circle cx="13" cy="13" r="11" fill="#fafafa" stroke="#df62c4" strokeWidth="1.800" /><path d="M10 18V8L18 6V16" fill="none" stroke="#db4f9b" strokeWidth="2" /><ellipse cx="8.500" cy="18" rx="2.500" ry="2" fill="#a05be6" /><ellipse cx="16.500" cy="16.500" rx="2.500" ry="2" fill="#ee466a" /></>],
  ["iBooks", <><circle cx="13" cy="13" r="11.500" fill="#f7931e" stroke="#f3dfc4" strokeWidth="1.400" /><path d="M12.500 8.500Q9 6.500 5.500 8.500V18Q9 16.500 12.500 18zM13.500 8.500Q17 6.500 20.500 8.500V18Q17 16.500 13.500 18z" fill="#fff" /></>],
  ["System Preferences", <><rect x="1.500" y="2" width="23" height="22" fill="#a5b3bc" /><circle cx="13" cy="13" r="8.600" fill="#b4b8ba" stroke="#26292c" strokeWidth="2.600" /><circle cx="13" cy="13" r="5.500" fill="#50555a" stroke="#222" /><path d="M13 13V5M13 13L20 17M13 13L6 17" stroke="#d0d2d3" strokeWidth="1.600" /><circle cx="13" cy="13" r="2" fill="#222" /></>],
  ["Firefox", <><circle cx="12.500" cy="13" r="11.500" fill="#1c4a97" /><path d="M3 8Q8 3 12 5L9 10L13 14L8 20Q2 16 3 8z" fill="#8cb9e4" /><path d="M19 2Q14 7 18 12Q13 15 14 24Q25 23 24.500 12Q24 7 21 8z" fill="#f4cf26" /><path d="M17 14q2 4-1 8" stroke="#bf7d13" fill="none" /></>],
  ["Spotify", <><circle cx="13" cy="13" r="11.800" fill="#2bd65c" /><path d="M5.500 9Q13 6.500 21 10.500M6.500 13.300Q13 11.300 19.500 14.500M7.500 17.200Q13 15.700 18 18.200" stroke="#12321c" strokeWidth="2.300" fill="none" strokeLinecap="round" /></>, true],
  ["Chrome", <><circle cx="13" cy="13" r="12" fill="#f8cc3c" /><path d="M13 13L2.600 7A12 12 0 0 1 23.400 7z" fill="#e2453a" /><path d="M2.600 7A12 12 0 0 0 12 25L17 16L13 13L8 16z" fill="#43a654" /><path d="M13 7H23.400" stroke="#e2453a" strokeWidth="1" /><circle cx="13" cy="13" r="5.500" fill="#fff" /><circle cx="13" cy="13" r="4.300" fill="#4a87ee" /></>, true],
  ["Fusion 360", <><rect x="0" y="0" width="26" height="26.500" fill="#e9f1f3" /><path d="M7 3H20V8H13V11H18V15H13V22L8 23z" fill="#e08636" /><path d="M7 3L9 5V23L7 21z" fill="#a95418" /><text x="24" y="25" textAnchor="end" fontFamily={F} fontSize="5" fontWeight="700" fill="#2d9fd1">360</text></>],
  ["TextEdit", <><path d="M3 4L17 1.500L20 23L6 25z" fill="#fafafa" /><path d="M19 3L24 4L20 24z" fill="#e8e8e8" /><path d="M24 2L16 22" stroke="#777" strokeWidth="1.500" /></>],
  ["Inkscape", <><path d="M13 1Q16 1 24 10Q27 14 22 15L16 17Q19 19 18 20L15 21L13 24.500L10 21Q6 21 8 18L3 15Q-1 13 3 10Q10 1 13 1z" fill="#151515" /><path d="M13 3L18 8L15 10L13 8.500L10 11L7 9z" fill="#e5edf4" /></>],
  ["XQuartz", XArt, true],
  ["Word", <><rect x="12" y="4" width="13" height="18" fill="#f5f7fa" /><path d="M14 8h9M14 11h9M14 14h9M14 17h9" stroke="#2d5da8" strokeWidth="1.200" /><path d="M1 4L15 1.500V24.500L1 22z" fill="#2c62b2" /><text x="8" y="17" textAnchor="middle" fontFamily={F} fontSize="10" fontWeight="700" fill="#fff">W</text></>, true],
  ["Burner", <><path d="M13 1Q16 4 17 8L20 6Q24 14 21 20Q18 25 12 24.500Q4 24 4 16Q4 12 8 7L10 10Q13 7 13 1z" fill="#e33b25" /><circle cx="13" cy="17" r="7.200" fill="#f8a51b" /><path d="M9 18.500Q13 23 17 18.500" stroke="#33210a" strokeWidth="1.300" fill="none" /><circle cx="10.500" cy="15" r="1.200" fill="#33210a" /><circle cx="15.500" cy="15" r="1.200" fill="#33210a" /></>, true],
  ["X11", XArt, true],
  ["EAGLE", <><rect x="0" y="0" width="26" height="26.500" fill="#f6e4cf" /><path d="M8 2H20V6H13V9H18V12.500H13V15.500H20V19H8z" fill="#d58a35" /><path d="M8 2L10 4V19H8z" fill="#a35b1b" /><text x="16" y="25" textAnchor="middle" fontFamily={F} fontSize="5" fontWeight="700" fill="#d5643a">EAGLE</text></>, true],
  ["GIMP", <><path d="M4 12L7 8L8 3L12 7Q17 9 20.500 3Q23 10 19 16Q14 19 8 16z" fill="#5b574d" /><ellipse cx="3.200" cy="11.500" rx="3" ry="2.500" fill="#191919" /><circle cx="9.500" cy="9.500" r="2.300" fill="#eee" /><circle cx="14" cy="9.500" r="2.700" fill="#eee" /><circle cx="9.500" cy="10" r="1" /><circle cx="14.300" cy="10" r="1.200" /><path d="M9 15L20 20" stroke="#c78645" strokeWidth="1.500" /><path d="M20 19l4 2 1.500 4-4.500-2z" fill="#40434a" /></>, true],
];
const files: [string, React.ReactNode][] = [
  ["Folder", <><path d="M3 4L19 2L23 4V24L7 25L3 23z" fill="#383b3b" /><rect x="10" y="7" width="8" height="8" fill="#dde52b" /><path d="M6 4V24" stroke="#6b6e6e" /></>],
  ["Drawing", <><rect x="0" y="6" width="26" height="15" fill="#f7f7f7" /><path d="M4 10h6M12 12h5" stroke="#ccc" /><rect x="16" y="15" width="10" height="11" fill="#f4dabb" /><path d="M19 17h5M19 20h4M19 23h5M19.500 17v6" stroke="#cf7b28" strokeWidth="1.500" /></>],
  ["Trash", <><path d="M3.500 5H23L20.500 24Q13 26.500 6 24z" fill="#d9dbdb" /><path d="M8 6L9 24M13 6V25M18 6L17 24M5 11H22M5.500 17H21" stroke="#c2c6c6" strokeWidth=".8" /><ellipse cx="13.200" cy="4.500" rx="9.800" ry="3" fill="#eee" stroke="#b3b7b7" /><path d="M8 4l3-1 2 2 4-2 2 1" stroke="#5d8d85" fill="none" strokeWidth="1.200" /></>],
];

const menus = ["File", "Edit", "Select", "View", "Image", "Layer", "Colors", "Tools", "Filters", "Windows", "Help"];

export default function App() {
  const [brush, setBrush] = useState(6);
  return (
    <Screen>
      <GlobalStyle />
      <MenuBar>
        <MenuGroup aria-label="Application menu">
          <MenuItem aria-label="Apple">
            <svg width="13" height="13" viewBox="0 0 13 13" fill="#33262a">
              <path d="M9 .5Q9 3 6.600 3.500Q6.600 1.200 9 .5zM6.700 4.300Q9 3 11 4.800Q9.300 6.200 9.900 8Q10.300 9.200 11.500 9.700Q10 13 8.300 12.500Q6.700 11.800 5.300 12.500Q3.500 12.900 2.300 9.700Q1 5.500 3.400 4.200Q5 3.500 6.700 4.300z" />
            </svg>
          </MenuItem>
          <MenuItem $strong>GIMP</MenuItem>
          {menus.map((m) => (
            <MenuItem key={m}>{m}</MenuItem>
          ))}
        </MenuGroup>
        <Status>
          <svg width="14" height="11" viewBox="0 0 14 11"><ellipse cx="7" cy="5.500" rx="6.500" ry="5" fill="#1c4a87" /><path d="M1 7Q4 2 8 4Q11 5 8 7Q5 8 5 6" fill="none" stroke="#79aee0" strokeWidth="1.300" /></svg>
          <svg width="9" height="12" viewBox="0 0 9 12"><path d="M2 3.500L7 8L4.500 10.500V1.500L7 4L2 8.500M0 6h1M8 6h1" fill="none" stroke="#8a7c82" /></svg>
          <svg width="15" height="12" viewBox="0 0 15 12" fill="none" stroke="#514850" strokeWidth="1.200"><path d="M1 4Q7.500-1.500 14 4M3 6.500Q7.500 2.500 12 6.500M5.200 8.800Q7.500 6.800 9.800 8.800" /><circle cx="7.500" cy="10.600" r=".7" fill="#514850" /></svg>
          <svg width="15" height="12" viewBox="0 0 15 12"><path d="M4 8.500H1V1H14V8.500H11" fill="none" stroke="#3b3338" strokeWidth="1.200" /><path d="M7.500 6L12 11.500H3z" fill="#3b3338" /></svg>
          <Battery>
            60%
            <svg width="18" height="9" viewBox="0 0 18 9"><rect x=".6" y=".6" width="14.500" height="7.800" rx="1" fill="none" stroke="#3b3338" strokeWidth="1.200" /><rect x="2" y="2" width="7" height="5" fill="#3b3338" /><path d="M16.800 3v3" stroke="#3b3338" strokeWidth="1.300" /></svg>
          </Battery>
          <Clock>Sun 5:03 PM</Clock>
          <svg width="12" height="12" viewBox="0 0 12 12" fill="none" stroke="#33262a" strokeWidth="1.300"><circle cx="4.800" cy="4.800" r="3.800" /><path d="M7.600 7.600L11.500 11.500" /></svg>
          <svg width="13" height="13" viewBox="0 0 13 13"><circle cx="6.500" cy="6.500" r="6" fill="#241f4b" /><path d="M1.500 7Q4 4 6.500 7Q9 9 11.500 6Q11 11 6.500 11Q2 11 1.500 7z" fill="#9a63e8" /><path d="M2 6Q6 9 11 7Q7 7 6 10Q3 10 2 6z" fill="#55d8ee" /></svg>
          <svg width="14" height="10" viewBox="0 0 14 10" stroke="#33262a" strokeWidth="1.400"><path d="M3.500 1.500H14M3.500 5H12M3.500 8.500H14M0 1.500h2M0 5h2M0 8.500h2" /></svg>
        </Status>
      </MenuBar>

      <TitleBar>
        <Lights>
          <Light $color="#fc5b57" aria-label="Close" />
          <Light $color="#fdbc2e" aria-label="Minimize" />
          <Light $color="#27c83f" aria-label="Zoom" />
        </Lights>
        <span>[test] (imported)-3.0 (Indexed color, 1 layer) 1404x1730 – GIMP</span>
      </TitleBar>

      <Body>
        <ToolboxPanel />

        <ImagePane>
          <TabStrip>
            <ImageTab>
              <Board w={30} h={37} />
              <button aria-label="Close image">
                <svg width="9" height="9" viewBox="0 0 9 9"><rect x=".5" y=".5" width="8" height="8" rx="1.500" fill="#ddd" stroke="#666" /><path d="M2.500 2.500l4 4M6.500 2.500l-4 4" stroke="#333" strokeWidth="1.300" /></svg>
              </button>
            </ImageTab>
            <TabRule />
          </TabStrip>
          <Workspace>
            <Corner aria-label="Image menu"><BoxArrow /></Corner>
            <RulerTop><HRuler /></RulerTop>
            <Corner aria-label="Zoom on resize">
              <svg width="9" height="9" viewBox="0 0 9 9"><rect x=".5" y=".5" width="8" height="8" fill="#eee" stroke="#88929c" strokeDasharray="1.500 1" /><circle cx="4.500" cy="4" r="2" fill="#a5c5ec" stroke="#4b5d74" /><path d="M6 5.500l2.500 3" stroke="#333" /></svg>
            </Corner>
            <RulerLeft><VRuler /></RulerLeft>
            <CanvasView><Board w={356} h={439} frame /></CanvasView>
            <Scroll $vertical><ScrollThumb /></Scroll>
            <Corner aria-label="Quick mask">
              <svg width="9" height="9" viewBox="0 0 9 9"><rect x=".5" y=".5" width="8" height="8" fill="none" stroke="#aaa" strokeDasharray="2 2" /></svg>
            </Corner>
            <Scroll><ScrollThumb /></Scroll>
            <Corner aria-label="Navigate">
              <svg width="11" height="11" viewBox="0 0 16 16">{tools[11][1]}</svg>
            </Corner>
          </Workspace>
          <StatusBar>
            <FieldBox $w={27}>
              <Select aria-label="Unit" defaultValue="px"><option>px</option></Select>
              <UpDown />
            </FieldBox>
            <FieldBox $w={29}><TextInput $right aria-label="Zoom" defaultValue="33.3%" /></FieldBox>
            <FieldBox $w={9} as="button" aria-label="Zoom presets"><UpDown /></FieldBox>
            <span>test.png (18.6 MB)</span>
          </StatusBar>
        </ImagePane>

        <Docks>
          <DockTabs $tall>
            <DockTab $active aria-label="Layers">
              <svg width="18" height="17" viewBox="0 0 18 17" fill="#f2f2f0" stroke="#999" strokeWidth=".8"><path d="M4 9H17L14 15.500H1z" /><path d="M4 5.500H17L14 12H1z" /><path d="M4 1.500H17L14 8H1z" /></svg>
            </DockTab>
            <DockTab aria-label="Channels">
              <svg width="19" height="17" viewBox="0 0 19 17"><path d="M4 9H18L15 16H1z" fill="#3465a4" /><path d="M4 6H18L15 13H1z" fill="#57a82c" /><path d="M4 1H18L15 10H1z" fill="#e01f1f" stroke="#8f1111" strokeWidth=".7" /></svg>
            </DockTab>
            <DockTab aria-label="Paths">
              <svg width="17" height="17" viewBox="0 0 17 17"><path d="M2 3Q13 2 10 15M2 15L8 8L15 2M3 8L13 13" fill="none" stroke="#444" strokeWidth="1.100" /><g fill="#b8cfec" stroke="#2e4d78" strokeWidth=".8"><path d="M3 6.500h3v3H3zM7.500 4.500h3v3h-3zM11 10.500h3v3h-3z" /></g></svg>
            </DockTab>
            <DockTab aria-label="Undo History">
              <svg width="18" height="17" viewBox="0 0 18 17"><path d="M1 6.500L7.500 1V4Q15 4 15 12Q15 15 12 16Q14 9 7.500 9V12z" fill="#f3d33c" stroke="#bd9412" strokeWidth=".9" /><path d="M12 2.500Q18 4 17 12" stroke="#e7cf6d" fill="none" strokeWidth="1.500" /></svg>
            </DockTab>
            <DockTab aria-label="Tool Options">
              <svg width="15" height="15" viewBox="0 0 15 15"><rect x="1" y="1" width="13" height="13" fill="#f5f5f3" stroke="#888" /><path d="M5 3.500V11.500M10 3.500V11.500" stroke="#888" /><rect x="3.500" y="4" width="3" height="3" fill="#fff" stroke="#444" /><circle cx="10" cy="9.500" r="1.700" fill="#fff" stroke="#444" /></svg>
            </DockTab>
            <DockMenu aria-label="Configure tab"><BoxArrow flip /></DockMenu>
          </DockTabs>
          <Panel $grow>
            <Row>
              <label htmlFor="mode">Mode:</label>
              <FieldBox>
                <Select id="mode" defaultValue="Normal"><option>Normal</option></Select>
                <UpDown />
              </FieldBox>
            </Row>
            <ScaleBox $fill="158px" $ink="#fff">
              <ScaleLabel htmlFor="opacity">Opacity</ScaleLabel>
              <ScaleInput $right id="opacity" defaultValue="100.0" />
              <UpDown dim />
            </ScaleBox>
            <LockRow>
              <span>Lock:</span>
              <button aria-label="Lock pixels"><svg width="12" height="13" viewBox="0 0 16 16">{tools[24][1]}</svg></button>
              <button aria-label="Lock alpha channel">
                <svg width="12" height="12" viewBox="0 0 12 12"><rect width="12" height="12" fill="#555" /><path d="M0 0h3v3H0zM6 0h3v3H6zM3 3h3v3H3zM9 3h3v3H9zM0 6h3v3H0zM6 6h3v3H6zM3 9h3v3H3zM9 9h3v3H9z" fill="#999" /></svg>
              </button>
            </LockRow>
            <LayerList>
              <LayerRow>
                <LayerCell $w={12}>
                  <svg width="10" height="7" viewBox="0 0 10 7"><path d="M.5 4Q5-2 9.500 4Q5 8.500 .5 4z" fill="#e3e5e5" stroke="#87919b" strokeWidth=".7" /><circle cx="5" cy="3.700" r="2.200" fill="#26456e" /></svg>
                </LayerCell>
                <LayerCell $w={14} />
                <LayerThumb><Board w={20} h={25} /></LayerThumb>
                test.png
              </LayerRow>
            </LayerList>
            <Actions>
              <Action id="new" label="New layer" focus />
              <Action id="folder" label="New layer group" dim />
              <Action id="up" label="Raise layer" dim />
              <Action id="down" label="Lower layer" dim />
              <Action id="dup" label="Duplicate layer" />
              <Action id="anchor" label="Anchor layer" dim />
              <Action id="shred" label="Delete layer" />
            </Actions>
          </Panel>
          <Grip><svg width="7" height="3"><path d="M.5 0V3M3.500 0V3M6.500 0V3" stroke="#c8c8c8" /></svg></Grip>
          <DockTabs>
            <DockTab $active $wide={48}>
              <svg width="13" height="13" viewBox="0 0 26 26"><rect x="1" y="1" width="24" height="24" fill="#fff" stroke="#222" strokeWidth="2" /><circle cx="13" cy="13" r="10" fill="url(#soft1)" /></svg>
              Brushes
            </DockTab>
            <DockTab $wide={48}>
              <svg width="13" height="13" viewBox="0 0 13 13"><rect x=".5" y=".5" width="12" height="12" fill="#fbb846" stroke="#333" /><path d="M4.500 1v11M8.500 1v11" stroke="#e99122" /></svg>
              Patterns
            </DockTab>
            <DockTab $wide={53}>
              <svg width="13" height="13" viewBox="0 0 13 13"><rect x=".5" y=".5" width="12" height="12" fill="url(#darkGrad)" stroke="#333" /></svg>
              Gradients
            </DockTab>
            <DockMenu aria-label="Configure tab"><BoxArrow flip /></DockMenu>
          </DockTabs>
          <BrushPanel brush={brush} setBrush={setBrush} />
        </Docks>

        <ToolboxPanel narrow />
      </Body>

      <Desktop>
        <Shelf>
          <ShelfGroup $n={29}>
            {apps.map(([name, art, on]) => (
              <ShelfItem key={name} aria-label={name}>
                <svg width="26" height="27" viewBox="0 0 26 27">{art}</svg>
                <Dot $on={on} />
              </ShelfItem>
            ))}
          </ShelfGroup>
          <ShelfRule />
          <ShelfGroup $n={3}>
            {files.map(([name, art]) => (
              <ShelfItem key={name} aria-label={name}>
                <svg width="26" height="27" viewBox="0 0 26 27">{art}</svg>
              </ShelfItem>
            ))}
          </ShelfGroup>
        </Shelf>
      </Desktop>

      <svg width="0" height="0" aria-hidden="true">
        <defs>
          <linearGradient id="blendGrad"><stop stopColor="#5c5c5c" /><stop offset="1" stopColor="#e2e2e2" /></linearGradient>
          <linearGradient id="darkGrad"><stop stopColor="#000" /><stop offset="1" stopColor="#fff" /></linearGradient>
          <radialGradient id="soft0"><stop stopColor="#111" /><stop offset=".4" stopColor="#111" stopOpacity=".5" /><stop offset="1" stopColor="#111" stopOpacity="0" /></radialGradient>
          <radialGradient id="soft1"><stop offset=".1" stopColor="#000" /><stop offset=".5" stopColor="#000" stopOpacity=".6" /><stop offset="1" stopColor="#000" stopOpacity="0" /></radialGradient>
          <radialGradient id="soft2"><stop offset=".5" stopColor="#000" /><stop offset="1" stopColor="#000" stopOpacity="0" /></radialGradient>
          <radialGradient id="softWide"><stop offset=".4" stopColor="#000" /><stop offset="1" stopColor="#000" stopOpacity="0" /></radialGradient>
        </defs>
      </svg>
    </Screen>
  );
}

function BrushPanel({ brush, setBrush }: { brush: number; setBrush: (n: number) => void }) {
  return (
    <BrushPanelBox>
      <FlatField>
        <TextInput aria-label="Filter brushes" placeholder="filter" />
        <Down />
      </FlatField>
      <BrushTitle>2. Hardness 050 (51 × 51)</BrushTitle>
      <BrushArea>
        <BrushGrid>
          {brushes.map(([art, mark], i) => (
            <BrushCell key={i} aria-label={`Brush ${i + 1}`} $active={brush === i} onClick={() => setBrush(i)}>
              <svg width="26" height="26" viewBox="0 0 26 26">
                {art}
                {mark && <path d="M21.500 23.500h4M23.500 21.500v4" stroke={mark} strokeWidth="1.300" />}
              </svg>
            </BrushCell>
          ))}
        </BrushGrid>
        <BrushScroll><BrushThumb /></BrushScroll>
      </BrushArea>
      <FlatField>
        <Select aria-label="Brush tags" defaultValue="Basic,"><option>Basic,</option></Select>
        <Down />
      </FlatField>
      <ScaleBox $fill="8px" $ink="#1c1c1c">
        <ScaleLabel $split htmlFor="spacing">Spacing</ScaleLabel>
        <ScaleInput $right id="spacing" defaultValue="10.0" />
        <UpDown />
      </ScaleBox>
      <Actions>
        <Action id="edit" label="Edit brush" />
        <Action id="new" label="New brush" />
        <Action id="dup" label="Duplicate brush" />
        <Action id="shred" label="Delete brush" dim />
        <Action id="refresh" label="Refresh brushes" />
      </Actions>
    </BrushPanelBox>
  );
}
